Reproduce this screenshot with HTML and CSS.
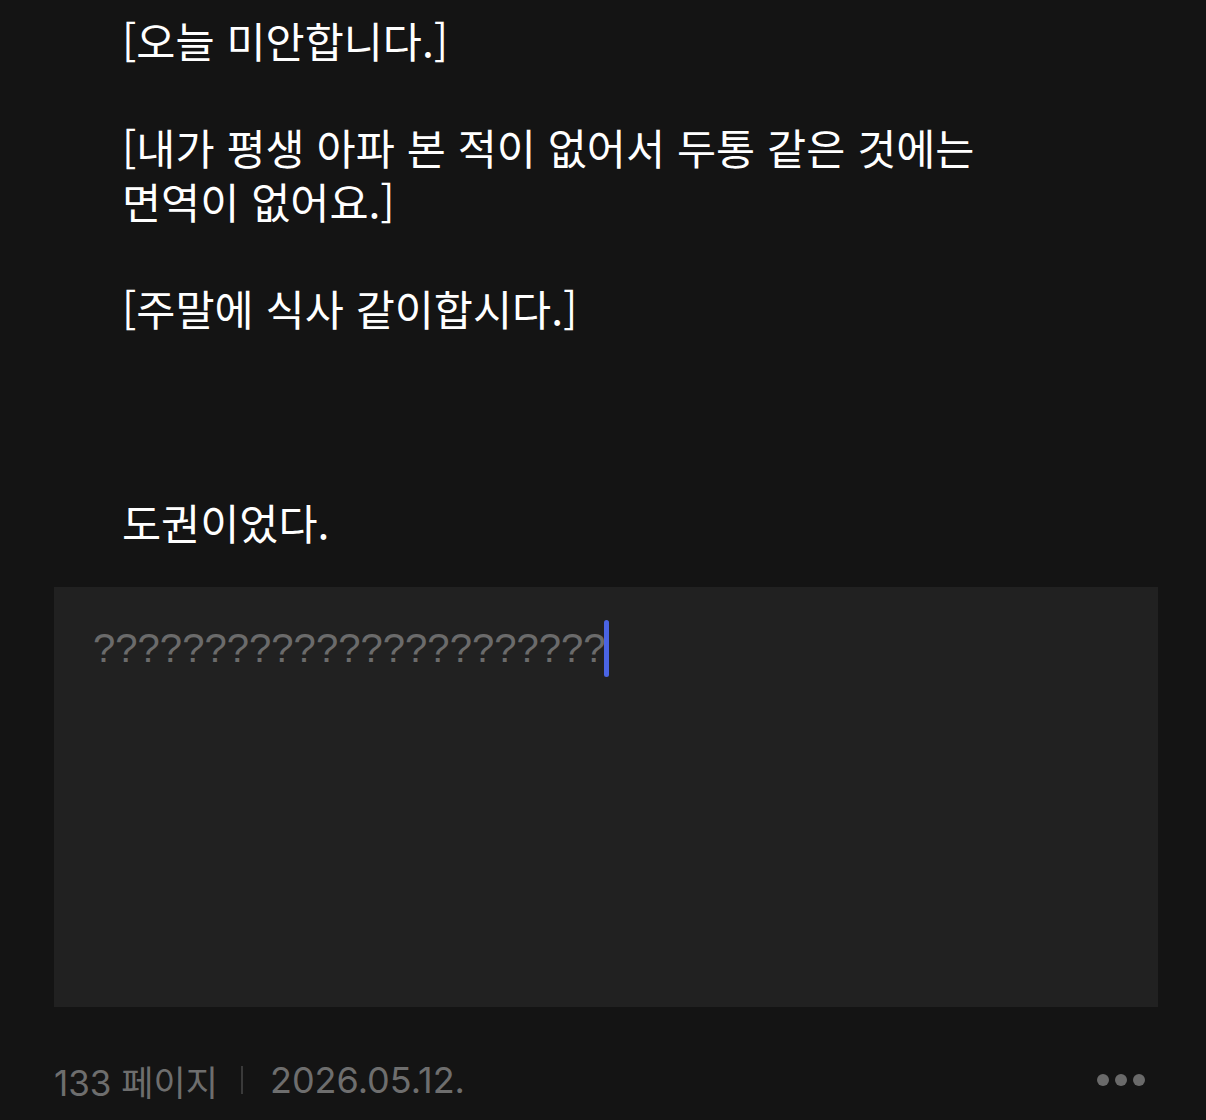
FILE: index.html
```html
<!DOCTYPE html>
<html lang="ko">
<head>
  <meta charset="UTF-8" />
  <meta name="viewport" content="width=device-width,initial-scale=1.0" />
  <title>133 페이지</title>
  <link rel="stylesheet" href="styles.css">
</head>
<body>
  <main class="reader">
    <article class="page-text">
      <p>[오늘 미안합니다.]</p>
      <p>[내가 평생 아파 본 적이 없어서 두통 같은 것에는 면역이 없어요.]</p>
      <p class="gap-lg">[주말에 식사 같이합시다.]</p>
      <p>도권이었다.</p>
    </article>
    <section class="memo" aria-label="메모 입력">
      <div class="memo-input"><span class="placeholder">???????????????????????</span><span class="caret" aria-hidden="true"></span></div>
    </section>
    <footer class="meta">
      <span class="page-no">133 페이지</span>
      <span class="divider" aria-hidden="true"></span>
      <span class="date">2026.05.12.</span>
      <button class="more" aria-label="더보기"><i></i><i></i><i></i></button>
    </footer>
  </main>
</body>
</html>
```

FILE: styles.css
```css
:root {
  --line: 53.5px;
}
body {
  margin: 0;
  background: #141414;
  color: #ffffff;
  font-family: "Noto Sans CJK KR", "Noto Sans", sans-serif;
}
.reader { width: 1206px; }
.page-text {
  padding: 13px 200px 0 122px;
  font-size: 42.5px;
  line-height: var(--line);
}
.page-text p { margin: 0 0 var(--line); }
.page-text p:last-child { margin-bottom: 0; }
.page-text p.gap-lg { margin-bottom: calc(var(--line) * 3); }

.memo {
  margin: 39px 48px 0 54px;
  height: 420px;
  background: #212121;
  padding: 35px 39px;
  box-sizing: border-box;
}
.memo-input {
  display: flex;
  align-items: center;
  height: var(--line);
  font-family: "Liberation Sans", sans-serif;
  font-size: 40.1px;
  color: #6b6b6b;
}
.caret {
  display: inline-block;
  width: 5px;
  height: 57px;
  margin-left: -2px;
  border-radius: 3px;
  background: #4a64e4;
}

.meta {
  display: flex;
  align-items: center;
  height: 60px;
  margin-top: 43px;
  padding: 0 61px 0 54px;
  font-family: "Inter", "Noto Sans CJK KR", sans-serif;
  font-size: 36px;
  color: #6e6e6e;
}
.page-no { font-size: 35px; }
.divider {
  width: 2px;
  height: 28px;
  margin: 0 27px 0 23px;
  background: #3a3a3a;
}
.more {
  margin-left: auto;
  display: flex;
  gap: 6px;
  padding: 0;
  border: 0;
  background: none;
  cursor: pointer;
}
.more i {
  width: 12px;
  height: 12px;
  border-radius: 50%;
  background: #6a6a6a;
}
```
